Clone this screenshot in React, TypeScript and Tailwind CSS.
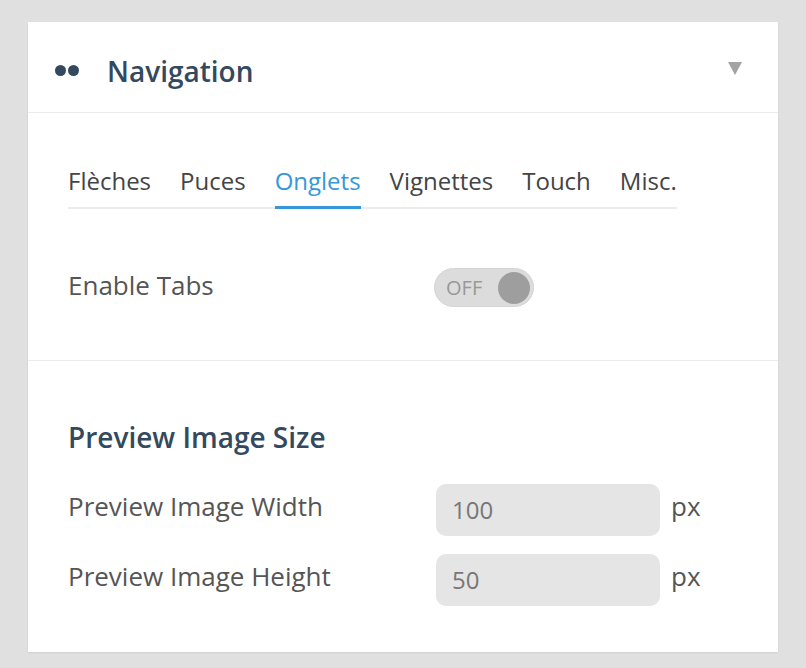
import React from "react";

export default function App() {
  const tabs = ["Flèches", "Puces", "Onglets", "Vignettes", "Touch", "Misc."];
  return (
    <div
      className="min-h-[668px] w-[806px] bg-[#e0e0e0] pt-[22px] pl-[28px]"
      style={{ fontFamily: '"Open Sans", sans-serif' }}
    >
      <div className="w-[750px] h-[630px] bg-white shadow-[0_1px_2px_rgba(0,0,0,0.08)] flex flex-col">
        <div className="h-[91px] flex items-start border-b border-[#ececec] pl-[27px] pr-[36px] pt-[35px]">
          <div className="flex gap-[2px] mt-[8px]">
            <span className="w-[11px] h-[11px] rounded-full bg-[#34495e]" />
            <span className="w-[11px] h-[11px] rounded-full bg-[#34495e]" />
          </div>
          <div className="ml-[28px] text-[28px] font-semibold text-[#34495e] leading-none">Navigation</div>
          <div className="ml-auto mt-[5px] w-0 h-0 border-l-[7px] border-r-[7px] border-t-[13px] border-l-transparent border-r-transparent border-t-[#a3a3a3]" />
        </div>
        <div className="px-[40px] pt-[56px] border-b border-[#ececec] h-[248px]">
          <div className="inline-flex border-b-2 border-[#ececec] gap-[29px]">
            {tabs.map((t) => (
              <div
                key={t}
                className={
                  "text-[24px] leading-none pb-[13px] mb-[-2px] " +
                  (t === "Onglets"
                    ? "text-[#3498db] border-b-[3px] border-[#3498db]"
                    : "text-[#444] border-b-[3px] border-transparent")
                }
              >
                {t}
              </div>
            ))}
          </div>
          <div className="flex items-start mt-[59px]">
            <div className="w-[366px] text-[26px] text-[#555] leading-none mt-[4px]">Enable Tabs</div>
            <div className="w-[100px] h-[39px] rounded-full bg-[#dcdcdc] border border-[#d4d4d4] flex items-center justify-between pl-[11px] pr-[3px]">
              <span className="text-[20px] leading-none text-[#999]">OFF</span>
              <span className="w-[32px] h-[32px] rounded-full bg-[#9e9e9e]" />
            </div>
          </div>
        </div>
        <div className="px-[40px] pt-[62px]">
          <div className="text-[28px] font-semibold text-[#34495e] leading-none">Preview Image Size</div>
          <div className="flex items-start mt-[33px]">
            <div className="w-[368px] text-[26px] text-[#555] leading-none mt-[9px]">Preview Image Width</div>
            <div className="w-[224px] h-[52px] rounded-[10px] bg-[#e5e5e5] flex items-center pl-[16px] text-[24px] text-[#777]">100</div>
            <div className="ml-[11px] text-[26px] text-[#555] leading-none mt-[9px]">px</div>
          </div>
          <div className="flex items-start mt-[18px]">
            <div className="w-[368px] text-[26px] text-[#555] leading-none mt-[9px]">Preview Image Height</div>
            <div className="w-[224px] h-[52px] rounded-[10px] bg-[#e5e5e5] flex items-center pl-[16px] text-[24px] text-[#777]">50</div>
            <div className="ml-[11px] text-[26px] text-[#555] leading-none mt-[9px]">px</div>
          </div>
        </div>
      </div>
    </div>
  );
}
